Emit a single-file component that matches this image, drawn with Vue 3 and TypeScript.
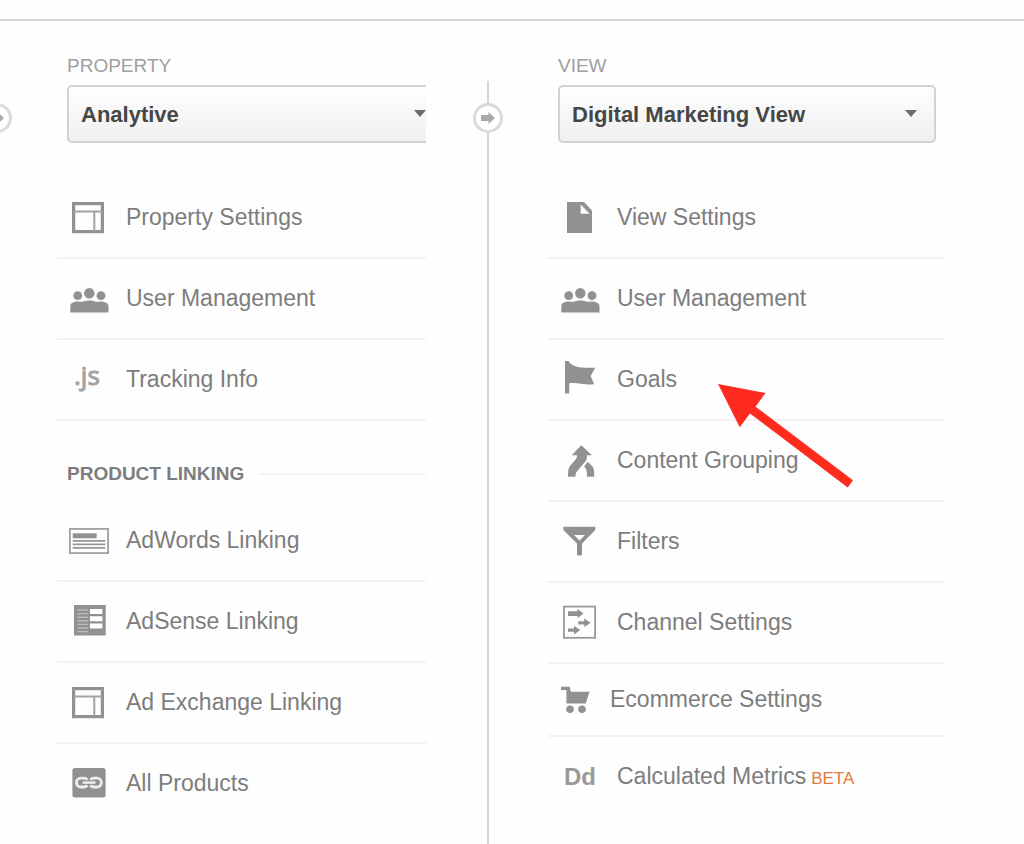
<script setup lang="ts">
import { ref } from 'vue'

type IconName =
  | 'layout' | 'users' | 'js' | 'adwords' | 'adsense' | 'link' | 'page'
  | 'flag' | 'merge' | 'filter' | 'channel' | 'cart' | 'dd'

interface Item {
  label: string
  icon: IconName
  compact?: boolean
  beta?: boolean
  pointed?: boolean
}

interface Group {
  title?: string
  items: Item[]
}

interface Column {
  id: string
  heading: string
  selected: string
  groups: Group[]
}

const columns = ref<Column[]>([
  {
    id: 'property',
    heading: 'PROPERTY',
    selected: 'Analytive',
    groups: [
      {
        items: [
          { label: 'Property Settings', icon: 'layout' },
          { label: 'User Management', icon: 'users' },
          { label: 'Tracking Info', icon: 'js' },
        ],
      },
      {
        title: 'PRODUCT LINKING',
        items: [
          { label: 'AdWords Linking', icon: 'adwords' },
          { label: 'AdSense Linking', icon: 'adsense' },
          { label: 'Ad Exchange Linking', icon: 'layout' },
          { label: 'All Products', icon: 'link' },
        ],
      },
    ],
  },
  {
    id: 'view',
    heading: 'VIEW',
    selected: 'Digital Marketing View',
    groups: [
      {
        items: [
          { label: 'View Settings', icon: 'page' },
          { label: 'User Management', icon: 'users' },
          { label: 'Goals', icon: 'flag', pointed: true },
          { label: 'Content Grouping', icon: 'merge' },
          { label: 'Filters', icon: 'filter' },
          { label: 'Channel Settings', icon: 'channel' },
          { label: 'Ecommerce Settings', icon: 'cart', compact: true },
          { label: 'Calculated Metrics', icon: 'dd', beta: true },
        ],
      },
    ],
  },
])
</script>

<template>
  <div class="page">
    <div class="topbar"></div>
    <main class="admin">
      <div class="gutter">
        <span class="step">
          <svg viewBox="0 0 14 12" width="14" height="12" aria-hidden="true"><path d="M0 3h7.500V0L14 6l-6.500 6V9H0z" /></svg>
        </span>
      </div>
      <template v-for="(col, i) in columns" :key="col.id">
        <div v-if="i > 0" class="divider">
          <span class="line line-top"></span>
          <span class="step">
            <svg viewBox="0 0 14 12" width="14" height="12" aria-hidden="true"><path d="M0 3h7.500V0L14 6l-6.500 6V9H0z" /></svg>
          </span>
          <span class="line line-rest"></span>
        </div>
        <section class="column" :class="col.id">
          <label class="heading" :for="col.id + '-select'">{{ col.heading }}</label>
          <div class="picker">
            <select :id="col.id + '-select'">
              <option>{{ col.selected }}</option>
            </select>
            <svg class="caret" viewBox="0 0 12 7" width="12" height="7" aria-hidden="true"><path d="M0 0h12L6 7z" /></svg>
          </div>
          <template v-for="(group, g) in col.groups" :key="g">
            <h2 v-if="group.title" class="group-title">{{ group.title }}</h2>
            <ul class="items">
              <li v-for="item in group.items" :key="item.label" :class="{ compact: item.compact }">
                <a href="#">
                  <svg class="icon" viewBox="0 0 42 41" aria-hidden="true">
                    <template v-if="item.icon === 'layout'">
                      <rect x="6.600" y="6.600" width="28.800" height="28" fill="none" stroke="#919191" stroke-width="3.200" />
                      <path d="M7 14.400h28M27.300 14.400V34" fill="none" stroke="#a2a2a2" stroke-width="2" />
                    </template>
                    <template v-else-if="item.icon === 'users'">
                      <circle cx="22.300" cy="15.300" r="5.200" />
                      <circle cx="10.700" cy="17.700" r="4.400" />
                      <circle cx="34" cy="17.700" r="4.400" />
                      <path d="M3.300 34.500V28c0-3 3.500-4.500 8-4.500 1.500 0 3 .2 4 .5 4-2 10-2 14 0 1-.3 2.500-.5 4-.5 4.500 0 8.200 1.500 8.200 4.500v6.500z" />
                    </template>
                    <text v-else-if="item.icon === 'js'" class="js" x="7" y="26">.js</text>
                    <template v-else-if="item.icon === 'adwords'">
                      <rect x="2.900" y="8.900" width="38.200" height="24.200" fill="none" stroke="#a0a0a0" stroke-width="1.800" />
                      <rect x="5.700" y="13.300" width="24" height="5" />
                      <path d="M5.700 20.900h32.600M5.700 24.400h32.600M5.700 27.900h32.600" stroke="#969696" stroke-width="1.800" />
                    </template>
                    <template v-else-if="item.icon === 'adsense'">
                      <rect x="7" y="4" width="31.700" height="30.500" />
                      <path d="M10.300 9H21M10.300 12.600H21M10.300 16.200H21M10.300 19.800H21M10.300 23.400H21M10.300 27H21M10.300 30.600H21" stroke="#bbb" stroke-width="1.400" />
                      <path d="M22.900 8h12.500v5H22.900zM22.900 15.200h12.500v5H22.900zM22.900 22.400h12.500v5H22.900z" fill="#fff" />
                    </template>
                    <template v-else-if="item.icon === 'link'">
                      <rect x="5.400" y="5" width="33.200" height="29.500" rx="2.500" />
                      <path d="M20.400 16.800c-.8-1-1.900-1.600-3.200-1.600h-3.400a4.400 4.400 0 0 0 0 8.800h3.400c1.300 0 2.400-.6 3.200-1.600M23.400 16.800c.8-1 1.900-1.600 3.200-1.600h3.400a4.400 4.400 0 0 1 0 8.800h-3.400c-1.300 0-2.400-.6-3.200-1.600" fill="none" stroke="#eee" stroke-width="2.800" />
                      <path d="M15.500 19.600h13" stroke="#eee" stroke-width="2.400" />
                    </template>
                    <template v-else-if="item.icon === 'page'">
                      <path d="M9 5h17l8 8.500V36H9z" />
                      <path d="M22.700 7.500v9.300H31.500z" fill="#fff" />
                    </template>
                    <template v-else-if="item.icon === 'flag'">
                      <path d="M7 2h3.600l.7 1.500c3 3 7 4.700 12 5 5 .3 9 .4 14 .2L32.600 17l3.700 8.300c-5 .3-9-.2-13-.6s-8-.9-12.100-.4v10.200H7z" />
                    </template>
                    <template v-else-if="item.icon === 'merge'">
                      <path d="M23.300 5.300 34 15.200h-5.200c.2 2.500 0 4.600-1.600 6.600l-6.900 8c-2 2.200-2.800 3.300-2.800 6.900H10c0-6.400.4-8.900 3.400-12.400l3.400-3.800c1.500-1.800 2.300-2.900 2.300-5.300h-5.400z" />
                      <path d="m29.700 21.800 3.700 3.400c2.600 2.600 2.900 5.800 2.900 11.500h-7.300c0-4.500.2-6.700-2.800-10.200z" />
                    </template>
                    <template v-else-if="item.icon === 'filter'">
                      <path fill-rule="evenodd" d="M5.300 5.700h32v3.200L24 22.500v11a1 1 0 0 1-1 1h-3a1 1 0 0 1-1-1v-11L5.300 8.900zM16 14l5.500 5.600 5.500-5.600z" />
                    </template>
                    <template v-else-if="item.icon === 'channel'">
                      <rect x="5.900" y="4.600" width="31.200" height="31.200" fill="none" stroke="#999" stroke-width="1.800" />
                      <path d="M10 9.300h9.500V7l6 4.600-6 4.600v-2.300H10zM20.300 19.200h6v-2.700l6.200 4.300-6.200 4.300v-2.700h-6zM10 26.500h6v-2.700l6.200 4.300-6.200 4.300v-2.700h-6z" />
                    </template>
                    <template v-else-if="item.icon === 'cart'">
                      <path d="M3 7.800h8.700l1.100 4.900h18.700l-3.800 11.900H8.400V11H3z" />
                      <circle cx="12" cy="30.200" r="3.800" />
                      <circle cx="24" cy="30.200" r="3.800" />
                    </template>
                    <text v-else class="dd" x="6" y="29">Dd</text>
                  </svg>
                  <span class="text">{{ item.label }}<small v-if="item.beta" class="beta">BETA</small></span>
                </a>
                <svg v-if="item.pointed" class="pointer" viewBox="0 0 136 104" width="136" height="104" aria-hidden="true">
                  <path d="M0 0 47.500 9 37.500 22.700 135 96.300l-5.300 7.200L32 29.500 21.700 43.300z" />
                </svg>
              </li>
            </ul>
          </template>
        </section>
      </template>
    </main>
  </div>
</template>

<style>
body {
  margin: 0;
  background: #fefefe;
}
</style>

<style scoped>
.page {
  display: flex;
  flex-direction: column;
  min-height: 100vh;
  overflow: hidden;
  font-family: "Liberation Sans", Arial, sans-serif;
  color: #7d7d7d;
}

.topbar {
  height: 19px;
  border-bottom: 2px solid #d4d4d4;
}

.admin {
  flex: 1;
  display: grid;
  grid-template-columns: 57fr 369fr 122fr 396fr 80fr;
}

.gutter {
  padding-top: 82px;
}

.gutter .step {
  margin-left: -18px;
}

.step {
  box-sizing: border-box;
  display: flex;
  align-items: center;
  justify-content: center;
  flex: none;
  width: 30px;
  height: 30px;
  border: 3px solid #dadada;
  border-radius: 50%;
  background: #fff;
}

.step svg {
  fill: #aaa;
}

.divider {
  display: flex;
  flex-direction: column;
  align-items: center;
  padding: 60px 0 0 2px;
}

.line {
  width: 2px;
  background: #d4d4d4;
}

.line-top {
  height: 22px;
}

.line-rest {
  flex: 1;
}

.column {
  min-width: 0;
  padding-top: 34px;
}

.column.property {
  overflow: hidden;
}

.heading {
  display: block;
  margin: 0 0 8px 10px;
  font-size: 19px;
  line-height: 22px;
  color: #9e9e9e;
}

.picker {
  position: relative;
  margin: 0 8px 35px 10px;
}

.property .picker {
  margin-right: -19px;
}

select {
  box-sizing: border-box;
  display: block;
  width: 100%;
  height: 58px;
  padding: 0 40px 0 12px;
  appearance: none;
  border: 2px solid #d2d2d2;
  border-radius: 5px;
  background: linear-gradient(#fefefe, #f0f0f0);
  font: bold 22px "Liberation Sans", Arial, sans-serif;
  color: #464646;
}

.caret {
  position: absolute;
  top: 25px;
  right: 19px;
  fill: #6c6c6c;
  pointer-events: none;
}

.group-title {
  display: flex;
  align-items: center;
  gap: 16px;
  margin: 42px 0 16px 10px;
  font-size: 19px;
  line-height: 22px;
  font-weight: bold;
}

.group-title::after {
  content: "";
  flex: 1;
  height: 2px;
  background: #f3f3f3;
}

.items {
  margin: 0;
  padding: 0;
  list-style: none;
}

.items li {
  position: relative;
}

.items a {
  box-sizing: border-box;
  display: flex;
  align-items: center;
  gap: 17px;
  height: 81px;
  padding-left: 10px;
  border-bottom: 2px solid #f2f2f2;
  font-size: 23px;
  line-height: 28px;
  color: inherit;
  text-decoration: none;
}

.items:last-child li:last-child a {
  border-color: transparent;
}

.items .compact a {
  height: 73px;
  gap: 10px;
}

.icon {
  flex: none;
  width: 42px;
  height: 41px;
  overflow: visible;
  fill: #919191;
}

.js {
  font: 26px "Open Sans", "Noto Sans", sans-serif;
  fill: #a2a2a2;
  stroke: #a2a2a2;
  stroke-width: 1px;
}

.dd {
  font: bold 24px "Liberation Sans", Arial, sans-serif;
  fill: #999;
}

.text {
  padding-bottom: 2px;
  white-space: nowrap;
}

.beta {
  margin-left: 5px;
  font-size: 17px;
  line-height: 1;
  color: #e37a3d;
}

.pointer {
  position: absolute;
  top: 44px;
  left: 170px;
  z-index: 1;
  fill: #fe2b1e;
  pointer-events: none;
}
</style>
